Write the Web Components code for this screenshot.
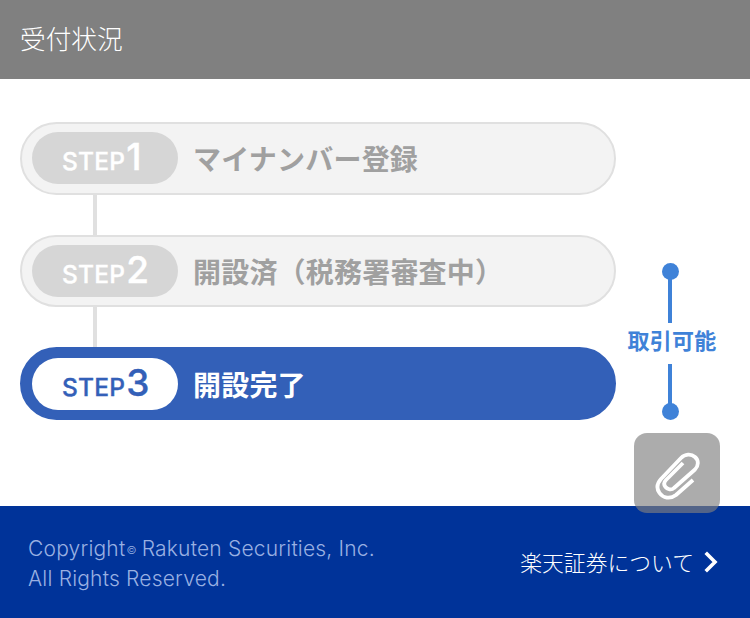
<!DOCTYPE html>
<html lang="ja">
<head>
<meta charset="utf-8">
<title>受付状況</title>
<style>
    html, body { margin: 0; padding: 0; background: #fff; }
    body { width: 750px; height: 618px; overflow: hidden; font-family: "Noto Sans CJK JP", sans-serif; }
</style>
</head>
<body>
<status-page>
    <status-header slot="header">受付状況</status-header>
    <step-item slot="steps" number="1" state="done">マイナンバー登録</step-item>
    <step-item slot="steps" number="2" state="done">開設済（税務署審査中）</step-item>
    <step-item slot="steps" number="3" state="active">開設完了</step-item>
    <trade-range slot="side">取引可能</trade-range>
    <clip-button slot="float"></clip-button>
    <status-footer slot="footer"></status-footer>
</status-page>

<script>
const FONT_JP = '"Noto Sans CJK JP", sans-serif'

class StatusPage extends HTMLElement {
    constructor() {
        super()
        this.attachShadow({ mode: 'open' }).innerHTML = `
            <style>
                :host { display: flex; flex-direction: column; position: relative; width: 750px; height: 618px; }
                main {
                    flex-grow: 1;
                    display: grid;
                    grid-template-columns: 596px 110px;
                    padding: 43px 0 0 20px;
                    box-sizing: border-box;
                }
                .steps { display: flex; flex-direction: column; }
                .float { position: absolute; left: 634px; top: 433px; }
            </style>
            <slot name="header"></slot>
            <main>
                <div class="steps"><slot name="steps"></slot></div>
                <div class="side"><slot name="side"></slot></div>
            </main>
            <slot name="footer"></slot>
            <div class="float"><slot name="float"></slot></div>
        `
    }
}

class StatusHeader extends HTMLElement {
    constructor() {
        super()
        this.attachShadow({ mode: 'open' }).innerHTML = `
            <style>
                :host {
                    display: flex;
                    align-items: center;
                    box-sizing: border-box;
                    height: 79px;
                    padding: 0 0 3px 20px;
                    background: #808080;
                    color: #fff;
                    font: 300 25.7px/1 ${FONT_JP};
                }
            </style>
            <slot></slot>
        `
    }
}

class StepItem extends HTMLElement {
    constructor() {
        super()
        const number = this.getAttribute('number')
        this.attachShadow({ mode: 'open' }).innerHTML = `
            <style>
                :host { display: block; position: relative; }
                :host(:not(:last-of-type)) { padding-bottom: 40px; }
                :host(:not(:last-of-type))::after {
                    content: "";
                    position: absolute;
                    left: 73px;
                    bottom: 0;
                    width: 4px;
                    height: 40px;
                    background: #e0e0e0;
                }
                .pill {
                    display: flex;
                    align-items: center;
                    box-sizing: border-box;
                    height: 72.5px;
                    padding-left: 10px;
                    gap: 15px;
                    border: 2px solid #e0e0e0;
                    border-radius: 37px;
                    background: #f3f3f3;
                    color: #a0a0a0;
                    font: 700 28px/1 ${FONT_JP};
                    letter-spacing: .2px;
                }
                .badge {
                    display: flex;
                    align-items: baseline;
                    box-sizing: border-box;
                    width: 146px;
                    height: 52px;
                    padding: 6px 0 0 30px;
                    border-radius: 26px;
                    background: #d6d6d6;
                    color: #fff;
                    font: 500 24.5px/1 Inter, sans-serif;
                    -webkit-text-stroke: .35px currentColor;
                }
                .badge b { font: 500 37px/1 Inter, sans-serif; margin-left: 1px; }
                :host([state="active"]) .pill {
                    height: 73px;
                    padding-top: 1px;
                    border-color: #3360b8;
                    background: #3360b8;
                    color: #fff;
                }
                :host([state="active"]) .badge { background: #fff; color: #3360b8; }
            </style>
            <div class="pill">
                <span class="badge">STEP<b>${number}</b></span>
                <span><slot></slot></span>
            </div>
        `
    }
}

class TradeRange extends HTMLElement {
    constructor() {
        super()
        this.attachShadow({ mode: 'open' }).innerHTML = `
            <style>
                :host {
                    display: flex;
                    flex-direction: column;
                    align-items: center;
                    width: 90px;
                    margin: 141px 0 0 9px;
                    color: #3f82d8;
                    font: 700 22px/1 ${FONT_JP};
                }
                .dot { width: 17px; height: 17px; border-radius: 50%; background: currentColor; flex: none; }
                .line { width: 4px; background: currentColor; flex: none; }
                .label { padding: 4px 0 13px 4px; height: 24px; line-height: 24px; letter-spacing: .3px; white-space: nowrap; }
            </style>
            <span class="dot"></span>
            <span class="line" style="height:44px;margin-top:-1px"></span>
            <span class="label"><slot></slot></span>
            <span class="line" style="height:40px"></span>
            <span class="dot" style="margin-top:-1px"></span>
        `
    }
}

class ClipButton extends HTMLElement {
    constructor() {
        super()
        this.attachShadow({ mode: 'open' }).innerHTML = `
            <style>
                :host {
                    display: flex;
                    align-items: center;
                    justify-content: center;
                    width: 86px;
                    height: 80px;
                    border-radius: 13px;
                    background: rgba(128, 128, 128, .65);
                }
                svg { display: block; margin-top: 4px; }
            </style>
            <svg width="46" height="50" viewBox="0 0 46 50" fill="none" stroke="#fff" stroke-width="3.8" stroke-linecap="butt" stroke-linejoin="round">
                <path d="M39 30 L22 45 C16 49.5 9 48 5.5 43 C2 38 3 33.5 7 29 L27 8 C31 4 37 3.5 41 7 C45 10.5 44.5 16 41 19.5 L20 38 C17.5 40.5 13.5 39.5 11.5 37 C9.5 34.5 10 32 12 30 L29 13"/>
            </svg>
        `
    }
}

class StatusFooter extends HTMLElement {
    constructor() {
        super()
        this.attachShadow({ mode: 'open' }).innerHTML = `
            <style>
                :host {
                    display: flex;
                    align-items: center;
                    justify-content: space-between;
                    box-sizing: border-box;
                    height: 112px;
                    padding: 0 32px 0 28px;
                    background: #003399;
                }
                .copy { padding-top: 4px; color: #99b0e2; font: 300 21px/30px Inter, "Liberation Sans", sans-serif; letter-spacing: .2px; }
                .copy sup { font-size: 11px; line-height: 0; vertical-align: 2px; margin: 0 5px 0 1px; }
                a {
                    display: flex;
                    align-items: center;
                    gap: 10px;
                    color: #fff;
                    font: 300 21.8px/1 ${FONT_JP};
                    text-decoration: none;
                }
                svg { display: block; }
            </style>
            <div class="copy">Copyright<sup>©</sup>Rakuten Securities, Inc.<br>All Rights Reserved.</div>
            <a>楽天証券について
                <svg width="14" height="22" viewBox="0 0 14 22" fill="none" stroke="#fff" stroke-width="3.6" stroke-linecap="square">
                    <path d="M3 3 L11 11 L3 19"/>
                </svg>
            </a>
        `
    }
}

customElements.define('status-page', StatusPage)
customElements.define('status-header', StatusHeader)
customElements.define('step-item', StepItem)
customElements.define('trade-range', TradeRange)
customElements.define('clip-button', ClipButton)
customElements.define('status-footer', StatusFooter)
</script>
</body>
</html>
